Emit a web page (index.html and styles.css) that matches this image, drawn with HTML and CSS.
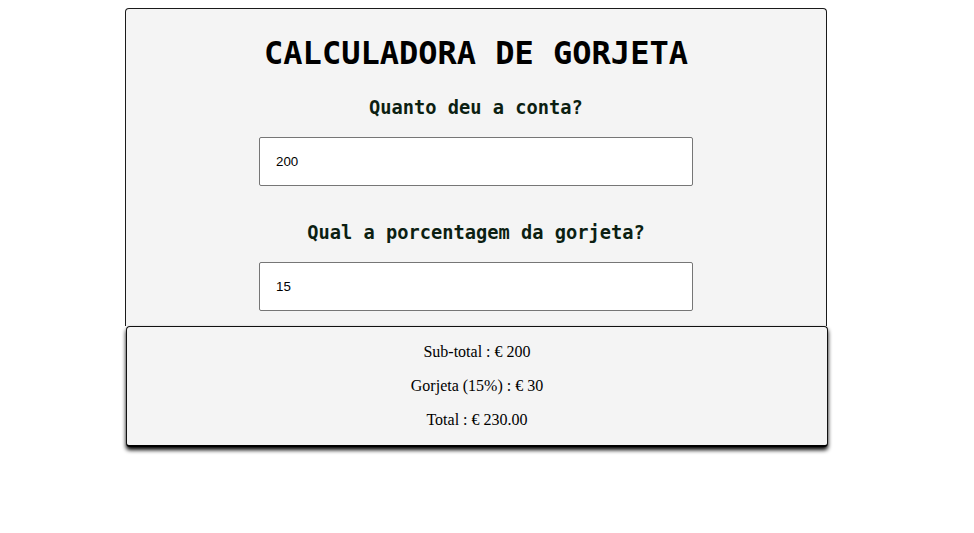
FILE: index.html
```html
<!DOCTYPE html>
<html lang="pt">
<head>
<meta charset="utf-8">
<title>Calculadora de Gorjeta</title>
<link rel="stylesheet" href="styles.css">
</head>
<body>
<main class="app">
  <section class="card">
    <h1 class="title">CALCULADORA DE GORJETA</h1>
    <h3 class="label">Quanto deu a conta?</h3>
    <input class="field" type="text" value="200">
    <h3 class="label label-second">Qual a porcentagem da gorjeta?</h3>
    <input class="field" type="text" value="15">
  </section>
  <section class="results">
    <p class="line">Sub-total : € 200</p>
    <p class="line">Gorjeta (15%) : € 30</p>
    <p class="line">Total : € 230.00</p>
  </section>
</main>
</body>
</html>
```
FILE: styles.css
```css
html, body {
  margin: 0;
  padding: 0;
  background: #ffffff;
}
body {
  padding: 8px 0 40px 125px;
}
.app {
  width: 703px;
  display: flex;
  flex-direction: column;
}
.card {
  box-sizing: border-box;
  width: 702px;
  background: #f4f4f4;
  border: 1px solid #1a1a1a;
  border-radius: 4px 4px 0 0;
  border-bottom: none;
  padding: 0 0 15px;
  display: flex;
  flex-direction: column;
  align-items: center;
}
.title {
  margin: 24px 0 23px;
  font-family: "DejaVu Sans Mono", "Liberation Mono", monospace;
  font-weight: bold;
  font-size: 32px;
  line-height: 40px;
  color: #000;
}
.label {
  margin: 0 0 17px;
  font-family: "DejaVu Sans Mono", "Liberation Mono", monospace;
  font-weight: bold;
  font-size: 18.7px;
  line-height: 24px;
  color: #0c1f12;
}
.label-second {
  margin-top: 35px;
}
.field {
  box-sizing: border-box;
  width: 434px;
  height: 49px;
  margin: 0;
  padding: 0 16px;
  border: 1px solid #767676;
  border-radius: 2px;
  background: #fff;
  font-family: "Liberation Sans", Arial, sans-serif;
  font-size: 13.33px;
  color: #000;
  outline: none;
}
.results {
  box-sizing: border-box;
  width: 702px;
  margin-left: 1px;
  background: #f4f4f4;
  border: 1px solid #111;
  border-bottom: 2px solid #000;
  border-radius: 4px;
  box-shadow: 0 3px 4px 0 #000;
  text-align: center;
  font-family: "Liberation Serif", "Times New Roman", serif;
  font-size: 16px;
  color: #000;
}
.line {
  margin: 16px 0;
  line-height: 18px;
}
```
